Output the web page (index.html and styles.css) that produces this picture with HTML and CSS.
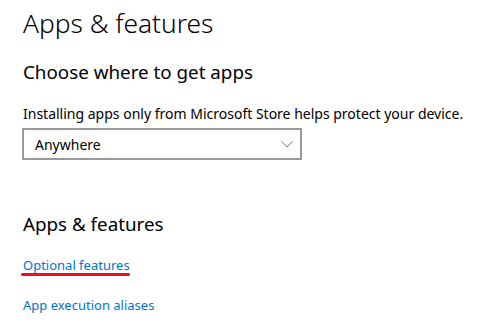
FILE: index.html
```html
<!DOCTYPE html>
<html lang="en">
<head>
    <meta charset="UTF-8">
    <title>Apps &amp; features</title>
    <link rel="stylesheet" href="styles.css">
</head>
<body>
    <div class="page">
        <h1>Apps &amp; features</h1>

        <div class="section">
            <h2>Choose where to get apps</h2>
            <p>Installing apps only from Microsoft Store helps protect your device.</p>
            <div class="dropdown">
                <span>Anywhere</span>
                <svg class="chevron" width="12" height="7" viewBox="0 0 12 7">
                    <path d="M0.5 0.5 L6 6 L11.5 0.5" fill="none" stroke="#777" stroke-width="1"/>
                </svg>
            </div>
        </div>

        <div class="section links">
            <h2>Apps &amp; features</h2>
            <a href="#" class="link marked">Optional features</a>
            <a href="#" class="link">App execution aliases</a>
        </div>
    </div>
</body>
</html>
```

FILE: styles.css
```css
body {
    margin: 0;
    background: #ffffff;
    font-family: "Noto Sans", "Open Sans", sans-serif;
    color: #000;
}
.page {
    padding: 0 23px;
}
h1 {
    margin: 0;
    padding-top: 4px;
    font-size: 26.3px;
    font-weight: 300;
    line-height: 38px;
}
h2 {
    margin: 0;
    font-size: 18.8px;
    font-weight: 400;
    line-height: 28px;
}
.section {
    margin-top: 16px;
}
p {
    margin: 18px 0 0;
    font-size: 14px;
    line-height: 20px;
}
.dropdown {
    margin-top: 4px;
    margin-left: -1px;
    width: 265px;
    height: 28px;
    border: 2px solid #999;
    display: flex;
    align-items: center;
    justify-content: space-between;
    padding: 0 0 0 11px;
    box-sizing: content-box;
    font-size: 14px;
}
.chevron {
    margin-right: 7px;
}
.links {
    margin-top: 50px;
}
.link {
    display: block;
    color: #0074d0;
    text-decoration: none;
    font-size: 13px;
    line-height: 20px;
}
.link.marked {
    margin-top: 17px;
    position: relative;
}
.link.marked::after {
    content: "";
    position: absolute;
    left: -2px;
    bottom: -1px;
    width: 109px;
    height: 3px;
    border-radius: 2px;
    background: #e81123;
}
.link + .link {
    margin-top: 20px;
}
```
